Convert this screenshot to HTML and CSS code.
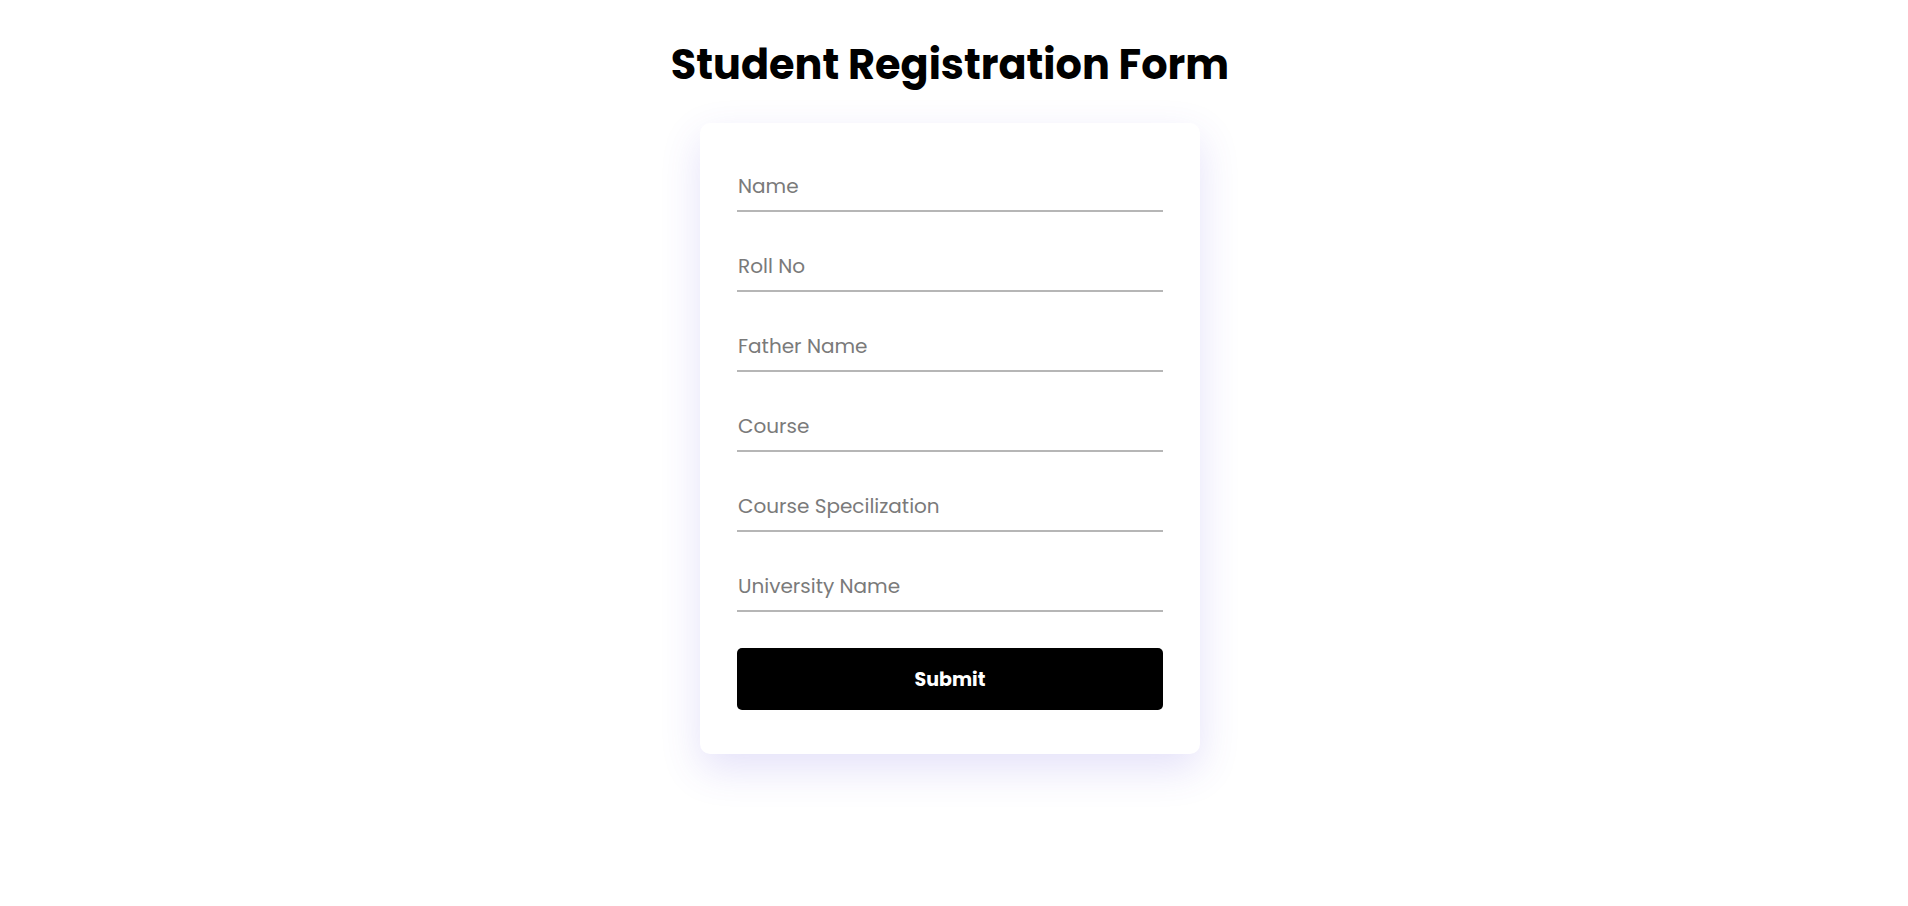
FILE: index.html
```html
<!DOCTYPE html>
<html lang="en">
<head>
<meta charset="utf-8">
<title>Student Registration Form</title>
<link rel="stylesheet" href="styles.css">
</head>
<body>
<main class="page">
  <h1 class="title">Student Registration Form</h1>
  <form class="card">
    <input class="field" type="text" placeholder="Name">
    <input class="field" type="text" placeholder="Roll No">
    <input class="field" type="text" placeholder="Father Name">
    <input class="field" type="text" placeholder="Course">
    <input class="field" type="text" placeholder="Course Specilization">
    <input class="field" type="text" placeholder="University Name">
    <button class="submit" type="button">Submit</button>
  </form>
</main>
</body>
</html>
```

FILE: styles.css
```css
* { box-sizing: border-box; }
html, body { margin: 0; background: #ffffff; }
body {
  font-family: "Poppins", "Open Sans", "DejaVu Sans", sans-serif;
  padding-right: 8px;
  min-height: 100vh;
}
.page {
  display: flex;
  flex-direction: column;
  align-items: center;
  padding-bottom: 80px;
}
.title {
  margin: 35px 0 28px;
  font-size: 41.4px;
  line-height: 60px;
  font-weight: 700;
  color: #000;
}
.card {
  width: 500px;
  background: #fff;
  border-radius: 10px;
  padding: 45px 37px 44px;
  display: flex;
  flex-direction: column;
  box-shadow: 0 15px 40px rgba(90, 70, 220, 0.16);
}
.field {
  height: 44px;
  margin: 0 0 36px;
  padding: 0 0 7px 1px;
  border: none;
  border-bottom: 2px solid #b6b6b6;
  font-family: inherit;
  font-size: 20px;
  color: #333;
  outline: none;
  background: transparent;
}
.field::placeholder { color: #7a7a7a; }
.submit {
  height: 62px;
  border: none;
  border-radius: 5px;
  background: #000;
  color: #fff;
  font-family: inherit;
  font-size: 19px;
  font-weight: 700;
}
```
